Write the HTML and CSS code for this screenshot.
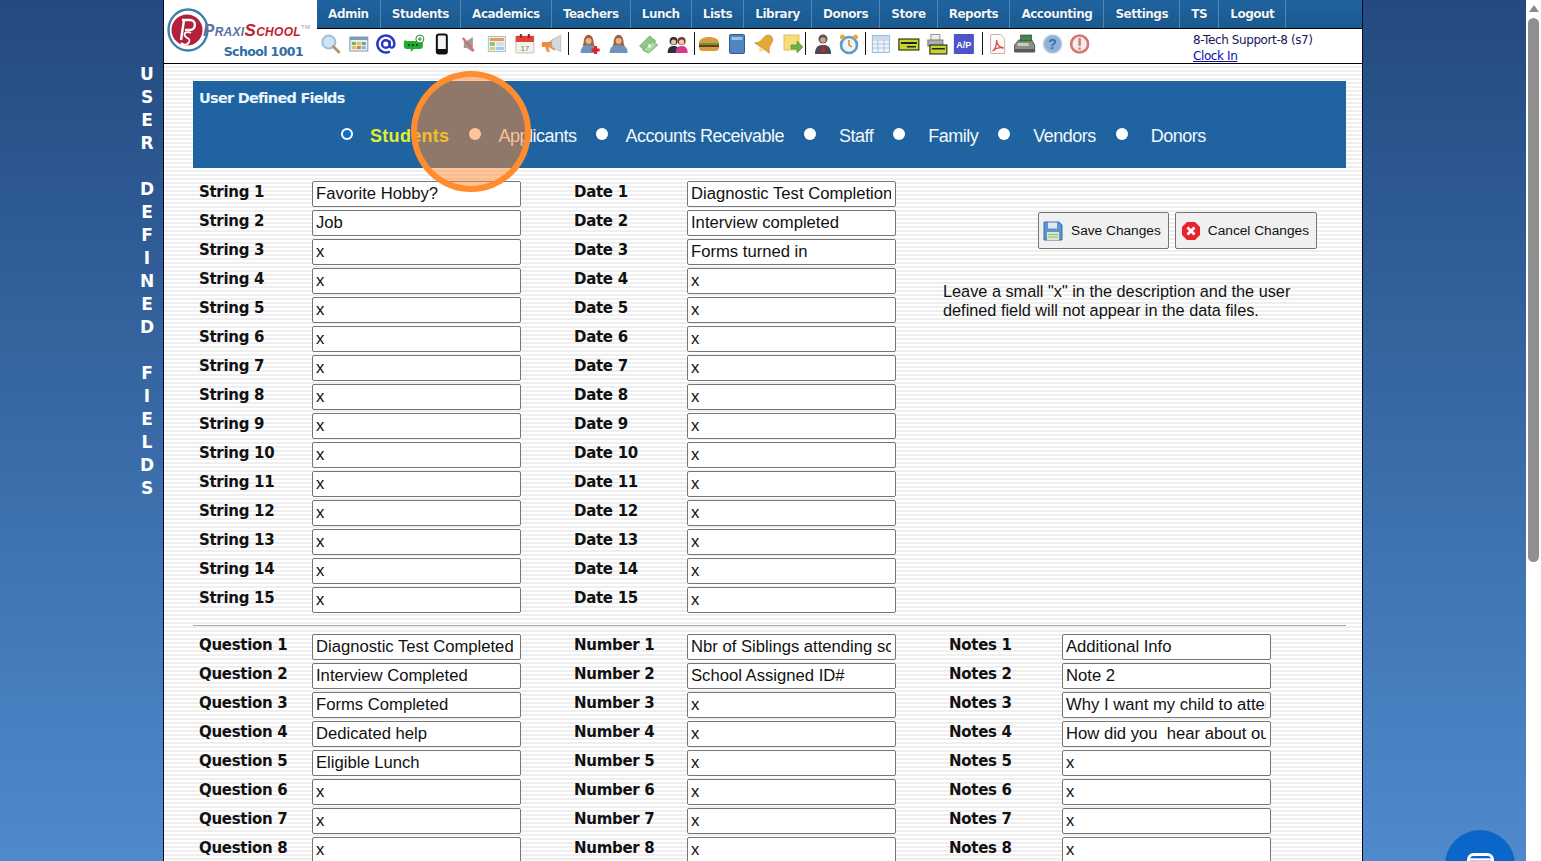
FILE: index.html
```html
<!DOCTYPE html>
<html lang="en">
<head>
<meta charset="utf-8">
<title>User Defined Fields</title>
<link rel="stylesheet" href="styles.css">
</head>
<body>
<div class="app">
  <aside class="side-title">U<br>S<br>E<br>R<br><br>D<br>E<br>F<br>I<br>N<br>E<br>D<br><br>F<br>I<br>E<br>L<br>D<br>S</aside>
  <div class="sheet">
    <header class="top">
      <div class="brand">
        <div class="brand-mark">
          <svg class="brand-ring" viewBox="0 0 42 44"><ellipse cx="21" cy="22" rx="19.5" ry="20.5" fill="none" stroke="#3f7fae" stroke-width="2.4"/><circle cx="20" cy="22" r="15.5" fill="#b3203c"/><path d="M15 12h8c6 0 7 9 0 10h-5M17 12l-3 20" fill="none" stroke="#fff" stroke-width="2.4"/><path d="M24 25c-4-2-8 0-6 3s6 2 4 6-6 3-8 1" fill="none" stroke="#fff" stroke-width="1.8"/></svg>
          <span class="brand-name"><i class="praxi">Praxi</i><i class="school">School</i><sup class="tm">TM</sup></span>
        </div>
        <div class="brand-sub">School 1001</div>
      </div>
      <div class="top-main">
        <nav class="menu">
          <a>Admin</a><a>Students</a><a>Academics</a><a>Teachers</a><a>Lunch</a><a>Lists</a><a>Library</a><a>Donors</a><a>Store</a><a>Reports</a><a>Accounting</a><a>Settings</a><a>TS</a><a>Logout</a>
        </nav>
        <div class="tools">
          <div class="group g1">
            <svg class="icon" viewBox="0 0 22 22"><circle cx="9" cy="9" r="6.5" fill="#cfe3f5" stroke="#9fc0de" stroke-width="2"/><path d="M13.5 13.5l5.5 5.5" stroke="#b89468" stroke-width="3" stroke-linecap="round"/></svg>
            <svg class="icon" viewBox="0 0 22 22"><rect x="2" y="4" width="18" height="14" fill="#e4eef6" stroke="#7d9cb8"/><rect x="2" y="4" width="18" height="3" fill="#7d9cb8"/><rect x="4" y="9" width="4" height="3" fill="#6fb45c"/><rect x="9" y="9" width="4" height="3" fill="#e8c04a"/><rect x="14" y="9" width="4" height="3" fill="#6fb45c"/><rect x="4" y="13" width="4" height="3" fill="#e8c04a"/><rect x="9" y="13" width="4" height="3" fill="#e2784a"/><rect x="14" y="13" width="4" height="3" fill="#8fb6d8"/></svg>
            <svg class="icon" viewBox="0 0 22 22"><circle cx="11" cy="11" r="3.8" fill="none" stroke="#2738c4" stroke-width="2.4"/><path d="M14.8 7.5v5c0 3 4.7 3 4.7-1.5A8.5 8.5 0 1 0 15 18.5" fill="none" stroke="#2738c4" stroke-width="2.4"/></svg>
            <svg class="icon" viewBox="0 0 22 22"><path d="M3 8h14c2 0 3 1 3 3v2c0 2-1 3-3 3h-6l-3 3v-3H4c-2 0-3-1-3-3v-3c0-2 1-3 2-3z" fill="#1fae2c"/><circle cx="6" cy="12" r="1" fill="#123"/><circle cx="10" cy="12" r="1" fill="#123"/><circle cx="14" cy="12" r="1" fill="#123"/><circle cx="17" cy="6" r="4" fill="#fff" stroke="#2a8a34"/><path d="M15 6h4M17 4v4" stroke="#2a8a34"/></svg>
            <svg class="icon" viewBox="0 0 22 22"><rect x="6" y="1.5" width="10" height="19" rx="2" fill="#f4f4f4" stroke="#111" stroke-width="2"/><rect x="6" y="16" width="10" height="4.5" fill="#111"/></svg>
            <svg class="icon" viewBox="0 0 22 22"><path d="M6 8h3l6-4v15l-6-4H6z" fill="#9a9aa2"/><path d="M5 5l11 13" stroke="#e06a5e" stroke-width="2.2"/></svg>
            <svg class="icon" viewBox="0 0 22 22"><rect x="2.500" y="3.500" width="17" height="15" fill="#eef3f8" stroke="#a9bfd6"/><rect x="4" y="5" width="14" height="3" fill="#ef9a4a"/><rect x="4" y="9" width="5" height="4" fill="#8fc67a"/><rect x="10" y="9" width="8" height="4" fill="#cfe0ee"/><rect x="4" y="14" width="5" height="3" fill="#f0c85c"/><rect x="10" y="14" width="8" height="3" fill="#a8c8e4"/></svg>
            <svg class="icon" viewBox="0 0 22 22"><rect x="2" y="3" width="18" height="17" rx="1" fill="#f4f0ea" stroke="#c9c0b4"/><rect x="2" y="3" width="18" height="6" fill="#e0403a"/><rect x="6" y="1" width="2" height="4" fill="#8a2a28"/><rect x="14" y="1" width="2" height="4" fill="#8a2a28"/><text class="cal-num" x="11" y="18">17</text></svg>
            <svg class="icon" viewBox="0 0 22 22"><path d="M1 9h7l6-4v13l-6-4H1z" fill="#f08a3c"/><path d="M11 7l9-5v17l-9-5z" fill="#d3d8dd" stroke="#aab1b8" stroke-width=".6"/><path d="M4 14h4l1 5H6z" fill="#d8a078"/></svg>
          </div>
          <span class="sep s1"></span>
          <div class="group g2">
            <svg class="icon" viewBox="0 0 22 22"><path d="M5 10c0-11 10-11 10 0l1 3H4z" fill="#a5603a"/><circle cx="10" cy="8" r="3" fill="#e8b48c"/><path d="M2 20c0-7 4-8 8-8s8 1 8 8z" fill="#6f93bd"/><path d="M13 17h8M17 13v8" stroke="#e01f26" stroke-width="3"/></svg>
            <svg class="icon" viewBox="0 0 22 22"><path d="M6 10c0-11 10-11 10 0l1 3H5z" fill="#a5603a"/><circle cx="11" cy="8" r="3" fill="#e8b48c"/><path d="M2 20c0-7 4-8 9-8s9 1 9 8z" fill="#6f93bd"/></svg>
            <svg class="icon" viewBox="0 0 22 22"><path d="M2 13l10-10 6 5-10 10z" fill="#8fc98a" stroke="#6fae6c"/><path d="M5 17l10-9 5 4-9 8z" fill="#a6d8a0" stroke="#6fae6c"/><circle cx="12" cy="13" r="2" fill="#e4f4e0"/></svg>
            <svg class="icon" viewBox="0 0 22 22"><circle cx="7" cy="8" r="4" fill="#2e2a28"/><circle cx="7" cy="9" r="2.6" fill="#e8c4a4"/><path d="M1 20c0-6 3-7 6-7s6 1 6 7z" fill="#2e2e34"/><circle cx="15" cy="8" r="4" fill="#7a3a2a"/><circle cx="15" cy="9" r="2.600" fill="#f0c8a8"/><path d="M9 20c0-6 3-7 6-7s6 1 6 7z" fill="#d8388c"/></svg>
          </div>
          <span class="sep s2"></span>
          <div class="group g3">
            <svg class="icon" viewBox="0 0 22 22"><path d="M1 10c0-8 20-8 20 0z" fill="#d89a3c"/><rect x="1" y="10" width="20" height="2" fill="#5aa03a"/><rect x="1" y="12" width="20" height="2" fill="#6a3a1c"/><path d="M1 14h20c0 4-3 4-4 4H5c-1 0-4 0-4-4z" fill="#d89a3c"/></svg>
            <svg class="icon" viewBox="0 0 22 22"><rect x="3.500" y="1.500" width="15" height="19" rx="1" fill="#4f86c0" stroke="#2e5e90"/><rect x="5.500" y="4" width="11" height="3" fill="#9cc0e2"/></svg>
            <svg class="icon" viewBox="0 0 22 22"><g transform="rotate(35 11 11)"><path d="M11 1c-4 0-5 4-5 7 0 4-2 6-4 8h18c-2-2-4-4-4-8 0-3-1-7-5-7z" fill="#e2a83a" stroke="#c48c22" stroke-width=".6"/><circle cx="11" cy="18" r="2.200" fill="#f6e2a4"/></g></svg>
            <svg class="icon" viewBox="0 0 22 22"><rect x="2" y="2" width="15" height="15" fill="#f7dc7a" stroke="#dfc05c"/><path d="M9 12h6V8l6 6-6 6v-4H9z" fill="#6fb04c" stroke="#4f8a34" stroke-width=".6"/></svg>
          </div>
          <span class="sep s3"></span>
          <div class="group g4">
            <svg class="icon" viewBox="0 0 22 22"><circle cx="11" cy="6" r="4.500" fill="#555"/><circle cx="11" cy="7" r="2.800" fill="#c9a88a"/><path d="M3 21c0-8 4-9 8-9s8 1 8 9z" fill="#4a4a52"/><path d="M10 12h2l1 6-2 2-2-2z" fill="#c8242c"/></svg>
            <svg class="icon" viewBox="0 0 22 22"><circle cx="11" cy="12" r="8" fill="#eef4f8" stroke="#5c9ac8" stroke-width="2.600"/><path d="M11 7v5l3 2" stroke="#d88a2c" stroke-width="1.500" fill="none"/><circle cx="4.500" cy="4" r="2.500" fill="#e6a83c"/><circle cx="17.500" cy="4" r="2.500" fill="#e6a83c"/></svg>
          </div>
          <span class="sep s4"></span>
          <div class="group g5">
            <svg class="icon" viewBox="0 0 22 22"><rect x="2.500" y="2.500" width="17" height="17" fill="#eef4fa" stroke="#9cb8d4"/><path d="M3 7h16M3 11h16M3 15h16M8 7v12M14 7v12" stroke="#a9c6de" fill="none"/><rect x="3" y="3" width="16" height="3.500" fill="#c8dcee"/></svg>
            <svg class="icon" viewBox="0 0 22 22"><rect x="1" y="6" width="20" height="11" fill="#c4d62c" stroke="#111"/><rect x="3" y="9" width="16" height="2" fill="#222"/><rect x="9" y="13" width="9" height="1.500" fill="#222"/></svg>
            <svg class="icon" viewBox="0 0 22 22"><rect x="5" y="1.500" width="9" height="7" fill="#eee" stroke="#999"/><rect x="2" y="7" width="15" height="6" fill="#aab0b6" stroke="#777"/><rect x="4" y="12" width="17" height="9" fill="#c4d62c" stroke="#111"/><rect x="6" y="15" width="13" height="1.500" fill="#222"/></svg>
            <svg class="icon" viewBox="0 0 22 22"><rect x="1" y="1" width="20" height="20" fill="#4a55c8"/><text class="ap" x="11" y="15">A/P</text></svg>
          </div>
          <span class="sep s5"></span>
          <div class="group g6">
            <svg class="icon" viewBox="0 0 22 22"><path d="M4 1.500h10l4 4v15H4z" fill="#fbfbfb" stroke="#d8a8a4"/><path d="M6 18c3-2 4-7 4-11 0 5 2 7 7 8-4-1-8 0-11 3z" fill="none" stroke="#e2443c" stroke-width="1.300"/></svg>
            <svg class="icon" viewBox="0 0 22 22"><path d="M1 12l4-5h13l3 5v7H1z" fill="#8a8f88" stroke="#555"/><rect x="7" y="2" width="11" height="6" fill="#3e8a46" stroke="#333" stroke-width=".6"/><rect x="4" y="10" width="11" height="3" fill="#c8ccc6"/><rect x="1" y="16" width="20" height="3" fill="#55594f"/></svg>
            <svg class="icon" viewBox="0 0 22 22"><circle cx="11" cy="11" r="9" fill="#8fb0d8" stroke="#b5cae4" stroke-width="1.500"/><text class="help" x="11" y="16">?</text></svg>
            <svg class="icon" viewBox="0 0 22 22"><circle cx="11" cy="11" r="8.500" fill="#f6ece8" stroke="#cf7a78" stroke-width="2.600"/><rect x="9.800" y="5" width="2.400" height="8" fill="#cf7a78"/><rect x="9.800" y="14.500" width="2.400" height="2.400" fill="#cf7a78"/></svg>
          </div>
          <div class="who">
            <div>8-Tech Support-8 (s7)</div>
            <a class="clock" href="#">Clock In</a>
          </div>
        </div>
      </div>
    </header>

    <main class="content">
      <section class="panel">
        <h1 class="panel-title">User Defined Fields</h1>
        <div class="choices">
          <label class="choice choice-on"><input type="radio" name="t" checked><span>Students</span></label>
          <label class="choice"><input type="radio" name="t"><span>Applicants</span></label>
          <label class="choice"><input type="radio" name="t"><span>Accounts Receivable</span></label>
          <label class="choice choice-wide"><input type="radio" name="t"><span>Staff</span></label>
          <label class="choice choice-wide"><input type="radio" name="t"><span>Family</span></label>
          <label class="choice choice-wide"><input type="radio" name="t"><span>Vendors</span></label>
          <label class="choice choice-wide"><input type="radio" name="t"><span>Donors</span></label>
        </div>
      </section>

      <section class="fields">
        <div class="col">
          <div class="row"><label>String 1</label><input value="Favorite Hobby?"></div>
          <div class="row"><label>String 2</label><input value="Job"></div>
          <div class="row"><label>String 3</label><input value="x"></div>
          <div class="row"><label>String 4</label><input value="x"></div>
          <div class="row"><label>String 5</label><input value="x"></div>
          <div class="row"><label>String 6</label><input value="x"></div>
          <div class="row"><label>String 7</label><input value="x"></div>
          <div class="row"><label>String 8</label><input value="x"></div>
          <div class="row"><label>String 9</label><input value="x"></div>
          <div class="row"><label>String 10</label><input value="x"></div>
          <div class="row"><label>String 11</label><input value="x"></div>
          <div class="row"><label>String 12</label><input value="x"></div>
          <div class="row"><label>String 13</label><input value="x"></div>
          <div class="row"><label>String 14</label><input value="x"></div>
          <div class="row"><label>String 15</label><input value="x"></div>
        </div>
        <div class="col">
          <div class="row"><label>Date 1</label><input value="Diagnostic Test Completion"></div>
          <div class="row"><label>Date 2</label><input value="Interview completed"></div>
          <div class="row"><label>Date 3</label><input value="Forms turned in"></div>
          <div class="row"><label>Date 4</label><input value="x"></div>
          <div class="row"><label>Date 5</label><input value="x"></div>
          <div class="row"><label>Date 6</label><input value="x"></div>
          <div class="row"><label>Date 7</label><input value="x"></div>
          <div class="row"><label>Date 8</label><input value="x"></div>
          <div class="row"><label>Date 9</label><input value="x"></div>
          <div class="row"><label>Date 10</label><input value="x"></div>
          <div class="row"><label>Date 11</label><input value="x"></div>
          <div class="row"><label>Date 12</label><input value="x"></div>
          <div class="row"><label>Date 13</label><input value="x"></div>
          <div class="row"><label>Date 14</label><input value="x"></div>
          <div class="row"><label>Date 15</label><input value="x"></div>
        </div>
        <div class="col col-actions">
          <div class="actions">
            <button class="btn btn-save" type="button">
              <svg class="btn-icon" viewBox="0 0 20 20"><path d="M1 1h15l3 3v15H1z" fill="#5f93d0" stroke="#3f6fa8"/><rect x="5" y="1.500" width="9" height="6" fill="#dfe9f4"/><rect x="4" y="11" width="12" height="8" fill="#d8e8c8"/><path d="M5 13.500h10M5 16h10" stroke="#8fbf6a"/></svg>
              <span>Save Changes</span>
            </button>
            <button class="btn btn-cancel" type="button">
              <svg class="btn-icon" viewBox="0 0 20 20"><path d="M6 1h8l5 5v8l-5 5H6l-5-5V6z" fill="#e8222a"/><path d="M6.500 6.500l7 7M13.500 6.500l-7 7" stroke="#fff" stroke-width="2.800"/></svg>
              <span>Cancel Changes</span>
            </button>
          </div>
          <p class="note">Leave a small "x" in the description and the user defined field will not appear in the data files.</p>
        </div>
      </section>

      <hr class="rule">

      <section class="fields">
        <div class="col">
          <div class="row"><label>Question 1</label><input value="Diagnostic Test Completed"></div>
          <div class="row"><label>Question 2</label><input value="Interview Completed"></div>
          <div class="row"><label>Question 3</label><input value="Forms Completed"></div>
          <div class="row"><label>Question 4</label><input value="Dedicated help"></div>
          <div class="row"><label>Question 5</label><input value="Eligible Lunch"></div>
          <div class="row"><label>Question 6</label><input value="x"></div>
          <div class="row"><label>Question 7</label><input value="x"></div>
          <div class="row"><label>Question 8</label><input value="x"></div>
        </div>
        <div class="col">
          <div class="row"><label>Number 1</label><input value="Nbr of Siblings attending school"></div>
          <div class="row"><label>Number 2</label><input value="School Assigned ID#"></div>
          <div class="row"><label>Number 3</label><input value="x"></div>
          <div class="row"><label>Number 4</label><input value="x"></div>
          <div class="row"><label>Number 5</label><input value="x"></div>
          <div class="row"><label>Number 6</label><input value="x"></div>
          <div class="row"><label>Number 7</label><input value="x"></div>
          <div class="row"><label>Number 8</label><input value="x"></div>
        </div>
        <div class="col">
          <div class="row"><label>Notes 1</label><input value="Additional Info"></div>
          <div class="row"><label>Notes 2</label><input value="Note 2"></div>
          <div class="row"><label>Notes 3</label><input value="Why I want my child to attend"></div>
          <div class="row"><label>Notes 4</label><input value="How did you  hear about our school"></div>
          <div class="row"><label>Notes 5</label><input value="x"></div>
          <div class="row"><label>Notes 6</label><input value="x"></div>
          <div class="row"><label>Notes 7</label><input value="x"></div>
          <div class="row"><label>Notes 8</label><input value="x"></div>
        </div>
      </section>
    </main>
  </div>
  <div class="gutter"></div>
  <div class="scrollbar"><span class="scroll-arrow"></span><span class="scroll-thumb"></span></div>
</div>

<div class="spotlight"></div>
<button class="chat" type="button" aria-label="Chat">
  <svg viewBox="0 0 27 20"><rect x="1.500" y="1.500" width="24" height="17" rx="5" fill="none" stroke="#fff" stroke-width="3"/><path d="M2 6.500h23" stroke="#fff" stroke-width="2.400"/></svg>
</button>
</body>
</html>
```
FILE: styles.css
```css
* { box-sizing: border-box; }
html, body { margin: 0; height: 100%; overflow: hidden; }
body {
  font-family: "Liberation Sans", Arial, sans-serif;
  background: linear-gradient(180deg, #234a80 0%, #4f8acd 100%);
}
.app { display: flex; height: 861px; overflow: hidden; }

.side-title {
  width: 163px;
  flex: none;
  padding: 63px 0 0 131px;
  text-align: center;
  font: bold 17px/23px "DejaVu Sans", sans-serif;
  color: #fff;
}

.sheet {
  width: 1200px;
  flex: none;
  border-left: 1px solid #0a0a20;
  border-right: 1px solid #0a0a20;
  background: repeating-linear-gradient(180deg, #ffffff 0, #ffffff 2px, #efefef 2px, #efefef 4px);
  overflow: hidden;
}
.gutter { flex: 1; }
.scrollbar {
  width: 15px;
  flex: none;
  background: #fff;
  display: flex;
  flex-direction: column;
  align-items: center;
  padding-top: 5px;
}
.scroll-arrow {
  width: 0; height: 0;
  border-left: 5px solid transparent;
  border-right: 5px solid transparent;
  border-bottom: 7px solid #8a8a8a;
}
.scroll-thumb {
  width: 11px;
  height: 544px;
  margin-top: 6px;
  background: #8f8f8f;
  border-radius: 6px;
}

/* header */
.top { display: flex; height: 64px; background: #fff; border-bottom: 1px solid #000; }
.brand { width: 153px; flex: none; position: relative; padding: 8px 0 0 3px; }
.brand-mark { display: flex; align-items: center; height: 44px; }
.brand-ring { width: 42px; height: 44px; flex: none; }
.brand-name {
  margin: 2px 0 0 -6px;
  font: bold italic 17px/16px "Liberation Sans", sans-serif;
  font-variant: small-caps;
  white-space: nowrap;
  letter-spacing: .3px;
}
.praxi { color: #5d6fa3; }
.school { color: #c2202f; }
.tm { font-size: 6px; font-style: normal; font-weight: normal; color: #999; vertical-align: 7px; line-height: 0; }
.brand-sub {
  position: absolute;
  right: 14px;
  bottom: 3px;
  font: bold 12.5px/16px "DejaVu Sans", sans-serif;
  color: #2f6da3;
  letter-spacing: -.6px;
}
.top-main { flex: 1; display: flex; flex-direction: column; }
.menu {
  display: flex;
  height: 29px;
  flex: none;
  background: linear-gradient(180deg, #1f639f, #1a5a90);
  border-bottom: 1px solid #000;
}
.menu a {
  display: flex;
  align-items: center;
  justify-content: center;
  height: 28px;
  padding: 0 11.1px;
  border-right: 1px solid #4f86b5;
  font: bold 12px/16px "DejaVu Sans", sans-serif;
  letter-spacing: -.5px;
  color: #f0f6fb;
  text-shadow: 0 0 1px #0b2c4e;
}
.tools { flex: 1; display: flex; align-items: center; height: 34px; }
.group { display: flex; flex: none; }
.icon { width: 22px; height: 22px; flex: 1 0 22px; display: block; margin-top: -5px; }
.g1 { width: 249px; }
.g2 { width: 117px; }
.g3 { width: 112px; }
.g4 { width: 52px; }
.g5 { width: 111px; }
.g6 { width: 109px; }
.sep { width: 1px; height: 23px; flex: none; background: #111; }
.s1 { margin: -5px 6px 0 2px; }
.s2 { margin: -5px 0 0 2px; }
.s3 { margin: -5px 4px 0 -2px; }
.s4 { margin: -5px 1px 0 3px; }
.s5 { margin: -5px 1px 0 4px; }
.cal-num { font: 8px "Liberation Sans", sans-serif; fill: #777; text-anchor: middle; }
.ap { font: bold 9px "Liberation Sans", sans-serif; fill: #fff; text-anchor: middle; }
.help { font: bold 14px "Liberation Sans", sans-serif; fill: #3e6fa8; text-anchor: middle; }
.who {
  margin: 4px 0 0 100px;
  font: 12px/16px "DejaVu Sans", sans-serif;
  color: #17175e;
  letter-spacing: -.4px;
  white-space: nowrap;
}
.clock { color: #0b0bb0; text-decoration: underline; }

/* content */
.content { padding: 17px 16px 0 29px; }
.panel { height: 87px; background: #1f64a0; padding: 7px 6px 0; }
.panel-title {
  margin: 0;
  font: bold 14.5px/20px "DejaVu Sans", sans-serif;
  letter-spacing: -.75px;
  color: #eaf5ff;
}
.choices { display: flex; gap: 20px; padding: 16px 0 0 142px; }
.choice {
  display: flex;
  align-items: center;
  gap: 17px;
  font-size: 18px;
  line-height: 24px;
  letter-spacing: -.5px;
  color: #f2f7fb;
  white-space: nowrap;
}
.choice-wide { gap: 23px; }
.choice input {
  appearance: none;
  width: 12px;
  height: 12px;
  margin: -5px 0 0;
  flex: none;
  border-radius: 50%;
  background: #fff;
}
.choice input:checked { background: #0b72cc; border: 2px solid #fff; }
.choice-on { color: #e6ee2c; font-weight: bold; letter-spacing: .3px; }

.fields { display: flex; margin-top: 13px; }
.col { width: 375px; flex: none; }
.row { display: flex; align-items: flex-start; height: 29px; }
.row label {
  width: 119px;
  flex: none;
  padding: 1px 0 0 6px;
  font: bold 15px/21px "DejaVu Sans", sans-serif;
  letter-spacing: -.3px;
  color: #111;
}
.row input {
  width: 209px;
  height: 26px;
  padding: 0 4px 1px 3px;
  border: 1px solid #767676;
  border-radius: 2px;
  background: #fff;
  font: 16.65px "Liberation Sans", sans-serif;
  color: #111;
  outline: none;
}
.rule { height: 1px; margin: 9px 0 0; border: 0; background: #a9a9a9; }
.rule + .fields { margin-top: 8px; }

.actions { display: flex; gap: 6px; padding: 31px 0 0 95px; }
.btn {
  display: flex;
  align-items: center;
  gap: 8px;
  height: 37px;
  padding: 0 7px 0 4px;
  border: 1px solid #767676;
  border-radius: 2px;
  background: #f0f0f0;
  font: 13.7px "Liberation Sans", sans-serif;
  color: #111;
  white-space: nowrap;
}
.btn-cancel { padding-left: 5px; gap: 7px; }
.btn-icon { width: 20px; height: 20px; flex: none; }
.note {
  width: 365px;
  margin: 33px 0 0;
  font-size: 16.3px;
  line-height: 19px;
  color: #111;
}

/* overlays */
.spotlight {
  position: absolute;
  left: 411px;
  top: 71px;
  width: 120px;
  height: 121px;
  border: 6px solid #ff8c2e;
  border-radius: 50%;
  background: rgba(255, 140, 50, .5);
}
.chat {
  position: absolute;
  left: 1445px;
  top: 830px;
  width: 70px;
  height: 70px;
  padding: 23px 0 0;
  display: flex;
  justify-content: center;
  align-items: flex-start;
  border: 0;
  border-radius: 50%;
  background: #0a66c8;
}
.chat svg { display: block; width: 27px; height: 20px; }
```
